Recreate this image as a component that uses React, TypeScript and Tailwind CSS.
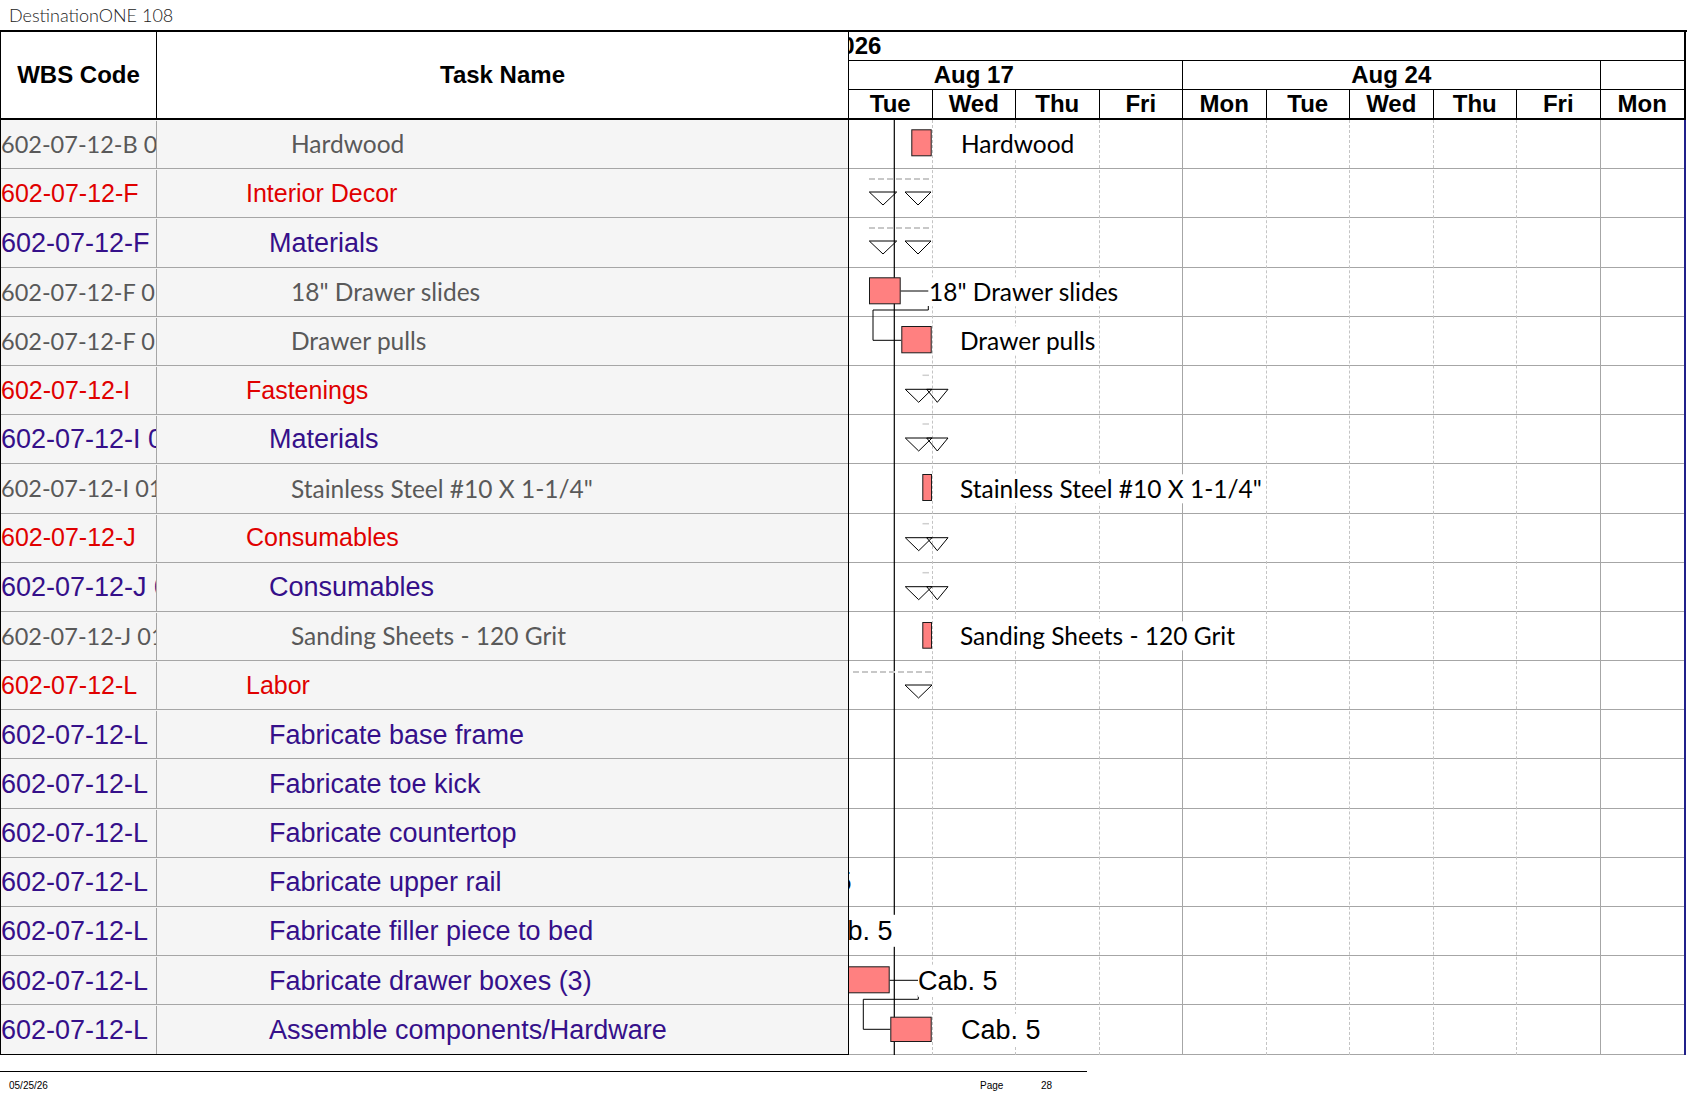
import React from 'react';

type Tone = 'item' | 'summary' | 'task';

const ROWS: { wbs: string; name: string; tone: Tone }[] = [
  { wbs: '602-07-12-B 01.01', name: 'Hardwood', tone: 'item' },
  { wbs: '602-07-12-F', name: 'Interior Decor', tone: 'summary' },
  { wbs: '602-07-12-F 01', name: 'Materials', tone: 'task' },
  { wbs: '602-07-12-F 01.01', name: '18" Drawer slides', tone: 'item' },
  { wbs: '602-07-12-F 01.02', name: 'Drawer pulls', tone: 'item' },
  { wbs: '602-07-12-I', name: 'Fastenings', tone: 'summary' },
  { wbs: '602-07-12-I 01', name: 'Materials', tone: 'task' },
  { wbs: '602-07-12-I 01.01', name: 'Stainless Steel #10 X 1-1/4"', tone: 'item' },
  { wbs: '602-07-12-J', name: 'Consumables', tone: 'summary' },
  { wbs: '602-07-12-J 01', name: 'Consumables', tone: 'task' },
  { wbs: '602-07-12-J 01.01', name: 'Sanding Sheets - 120 Grit', tone: 'item' },
  { wbs: '602-07-12-L', name: 'Labor', tone: 'summary' },
  { wbs: '602-07-12-L', name: 'Fabricate base frame', tone: 'task' },
  { wbs: '602-07-12-L', name: 'Fabricate toe kick', tone: 'task' },
  { wbs: '602-07-12-L', name: 'Fabricate countertop', tone: 'task' },
  { wbs: '602-07-12-L', name: 'Fabricate upper rail', tone: 'task' },
  { wbs: '602-07-12-L', name: 'Fabricate filler piece to bed', tone: 'task' },
  { wbs: '602-07-12-L', name: 'Fabricate drawer boxes (3)', tone: 'task' },
  { wbs: '602-07-12-L', name: 'Assemble components/Hardware', tone: 'task' },
];

const TONE: Record<Tone, { wbs: string; name: string }> = {
  item: {
    wbs: "font-['Lato','Noto_Sans',sans-serif] text-[23.5px] text-[#595959]",
    name: "pl-[134px] font-['Lato','Noto_Sans',sans-serif] text-[24.5px] text-[#595959]",
  },
  summary: {
    wbs: "font-['Liberation_Sans',Arial,sans-serif] text-[25px] text-[#e00000]",
    name: "pl-[89px] font-['Liberation_Sans',Arial,sans-serif] text-[25px] text-[#e00000]",
  },
  task: {
    wbs: "font-['Liberation_Sans',Arial,sans-serif] text-[27px] text-[#35108a]",
    name: "pl-[112px] font-['Liberation_Sans',Arial,sans-serif] text-[27px] text-[#35108a]",
  },
};

const DAYS = ['Tue', 'Wed', 'Thu', 'Fri', 'Mon', 'Tue', 'Wed', 'Thu', 'Fri', 'Mon'];

// week boundaries are solid, day boundaries dashed
const GRID = [
  'border-r border-dashed border-[#c4c4c4]',
  'border-r border-dashed border-[#c4c4c4]',
  'border-r border-dashed border-[#c4c4c4]',
  'border-r border-[#a6a6a6]',
  'border-r border-dashed border-[#c4c4c4]',
  'border-r border-dashed border-[#c4c4c4]',
  'border-r border-dashed border-[#c4c4c4]',
  'border-r border-dashed border-[#c4c4c4]',
  'border-r border-[#a6a6a6]',
  '',
];

const CALIBRI = "font-['Lato','Noto_Sans',sans-serif] text-[24.5px] text-black";
const ARIAL = "font-['Liberation_Sans',Arial,sans-serif] text-[27px] text-black";

const LABELS = [
  { text: 'Hardwood', pos: 'left-[112px] top-[24px]', font: CALIBRI },
  { text: '18" Drawer slides', pos: 'left-[80px] top-[172px]', font: CALIBRI },
  { text: 'Drawer pulls', pos: 'left-[111px] top-[221px]', font: CALIBRI },
  { text: 'Stainless Steel #10 X 1-1/4"', pos: 'left-[111px] top-[369px]', font: CALIBRI },
  { text: 'Sanding Sheets - 120 Grit', pos: 'left-[111px] top-[516px]', font: CALIBRI },
  { text: 'Cab. 5', pos: 'left-[-77px] top-[762px] pr-[3px]', font: ARIAL },
  { text: 'Cab. 5', pos: 'left-[-36px] top-[811px] pr-[3px]', font: ARIAL },
  { text: 'Cab. 5', pos: 'left-[69px] top-[861px]', font: ARIAL },
  { text: 'Cab. 5', pos: 'left-[112px] top-[910px]', font: ARIAL },
];

const Summary: React.FC<{ y: number; pair: 'split' | 'overlap' | 'single'; dashFrom?: number; dash?: 'long' | 'tick' }> = ({ y, pair, dashFrom = 20, dash = 'long' }) => {
  const b = y + 13;
  return (
    <g>
      {dash === 'long' ? (
        <line x1={dashFrom} y1={y - 13} x2={83} y2={y - 13} stroke="#c8c8c8" strokeWidth={2} strokeDasharray="6 3" />
      ) : (
        <line x1={73.5} y1={y - 14} x2={80} y2={y - 14} stroke="#cfcfcf" strokeWidth={1.5} />
      )}
      {pair === 'split' && (
        <>
          <polygon points={`20.3,${y} 47.7,${y} 34,${b}`} fill="none" stroke="#000" strokeWidth={1} />
          <polygon points={`56,${y} 82,${y} 69,${b}`} fill="none" stroke="#000" strokeWidth={1} />
        </>
      )}
      {pair === 'overlap' && (
        <>
          <polygon points={`56.3,${y} 83,${y} 69.7,${b}`} fill="none" stroke="#000" strokeWidth={1} />
          <polygon points={`77.7,${y} 99,${y} 88.3,${b}`} fill="none" stroke="#000" strokeWidth={1} />
        </>
      )}
      {pair === 'single' && <polygon points={`56,${y} 83,${y} 69.5,${b}`} fill="none" stroke="#000" strokeWidth={1} />}
    </g>
  );
};

const Bar: React.FC<{ x: number; y: number; w: number; h: number }> = ({ x, y, w, h }) => (
  <rect x={x + 0.5} y={y + 0.5} width={w - 1} height={h - 1} fill="#ff8080" stroke="#1a1a1a" strokeWidth={1} />
);

const GanttShapes: React.FC = () => (
  <svg className="absolute inset-0 h-full w-full overflow-hidden" width="835" height="935">
    <line x1={45.3} y1={0} x2={45.3} y2={935} stroke="#000" strokeWidth={1.2} />
    <Bar x={62.3} y={9.3} w={20.4} h={27} />
    <Summary y={72} pair="split" />
    <Summary y={121} pair="split" />
    <Bar x={20} y={157.3} w={31.7} h={27} />
    <polyline points="51.7,171 79.3,171" fill="none" stroke="#000" strokeWidth={1} />
    <polyline points="79.3,186 79.3,190 24,190 24,220.3 52.3,220.3" fill="none" stroke="#000" strokeWidth={1} />
    <Bar x={52.3} y={206} w={30.4} h={27.3} />
    <Summary y={269.3} pair="overlap" dash="tick" />
    <Summary y={318} pair="overlap" dash="tick" />
    <Bar x={73.3} y={354} w={9.7} h={27} />
    <Summary y={417.7} pair="overlap" dash="tick" />
    <Summary y={466.7} pair="overlap" dash="tick" />
    <Bar x={73.3} y={502} w={9.7} h={26.7} />
    <Summary y={565} pair="single" dashFrom={4} />
    <Bar x={-2} y={846.3} w={42.7} h={27} />
    <polyline points="40.7,860.3 69.3,860.3" fill="none" stroke="#000" strokeWidth={1} />
    <polyline points="69.3,875 69.3,879.3 14.3,879.3 14.3,909.3 41.3,909.3" fill="none" stroke="#000" strokeWidth={1} />
    <Bar x={41.3} y={896.7} w={41.4} h={25.3} />
  </svg>
);

const App: React.FC = () => {
  return (
    <div className="h-[1097px] w-[1687px] overflow-hidden bg-white text-black">
      <div className="flex h-[30px] items-center pl-[9px] font-['Lato','Noto_Sans',sans-serif] text-[18px] font-light text-[#222]">
        DestinationONE 108
      </div>

      <div className="flex border-t-2 border-black">
        {/* table side */}
        <div className="w-[848px] shrink-0 border-l border-black">
          <div className="flex h-[88px] border-b-2 border-black font-['Liberation_Sans',Arial,sans-serif] text-[24px] font-bold">
            <div className="flex w-[156px] shrink-0 items-center justify-center border-r border-black">WBS Code</div>
            <div className="flex flex-1 items-center justify-center">Task Name</div>
          </div>
          {ROWS.map((row, i) => (
            <div key={i} className="flex h-[49.2px] border-b border-[#a6a6a6] bg-[#f5f5f5] pt-[1px] last:border-black">
              <div className={`flex w-[156px] shrink-0 items-center overflow-hidden whitespace-nowrap border-r border-[#a6a6a6] ${TONE[row.tone].wbs}`}>
                {row.wbs}
              </div>
              <div className={`flex flex-1 items-center overflow-hidden whitespace-nowrap ${TONE[row.tone].name}`}>{row.name}</div>
            </div>
          ))}
        </div>

        {/* gantt side */}
        <div className="w-[838px] shrink-0 border-l border-black">
          <div className="border-r-2 border-black font-['Liberation_Sans',Arial,sans-serif] text-[24px] font-bold">
            <div className="flex h-[29px] items-center overflow-hidden whitespace-nowrap border-b border-black">
              <span className="ml-[-21px]">2026</span>
            </div>
            <div className="flex h-[29px] overflow-hidden border-b border-black">
              <div className="ml-[-83.5px] flex w-[417.5px] shrink-0 items-center justify-center border-r border-black">Aug 17</div>
              <div className="flex w-[417.5px] shrink-0 items-center justify-center border-r border-black">Aug 24</div>
              <div className="flex-1" />
            </div>
            <div className="flex h-[30px] border-b-2 border-black">
              {DAYS.map((d, i) => (
                <div
                  key={i}
                  className={`flex w-[83.5px] shrink-0 items-center justify-center ${i < DAYS.length - 1 ? 'border-r border-black' : ''}`}
                >
                  {d}
                </div>
              ))}
            </div>
          </div>

          <div className="relative overflow-hidden border-r-2 border-[#20208a]">
            {ROWS.map((_, i) => (
              <div key={i} className="h-[49.2px] border-b border-[#a6a6a6] last:border-black" />
            ))}
            <div className="absolute inset-0 flex">
              {GRID.map((cls, i) => (
                <div key={i} className={`h-full w-[83.5px] shrink-0 ${cls}`} />
              ))}
            </div>
            <GanttShapes />
            {LABELS.map((l, i) => (
              <span
                key={i}
                className={`absolute -translate-y-1/2 whitespace-nowrap bg-white leading-[1.2] ${l.pos} ${l.font}`}
              >
                {l.text}
              </span>
            ))}
          </div>
        </div>
      </div>

      <div className="mt-[16px] w-[1087px] border-t-[1.5px] border-black" />
      <div className="flex w-[1087px] pl-[9px] pt-[6px] font-['Liberation_Sans',Arial,sans-serif] text-[10px] text-black">
        <span className="w-[971px]">05/25/26</span>
        <span className="w-[61px]">Page</span>
        <span>28</span>
      </div>
    </div>
  );
};

export default App;
